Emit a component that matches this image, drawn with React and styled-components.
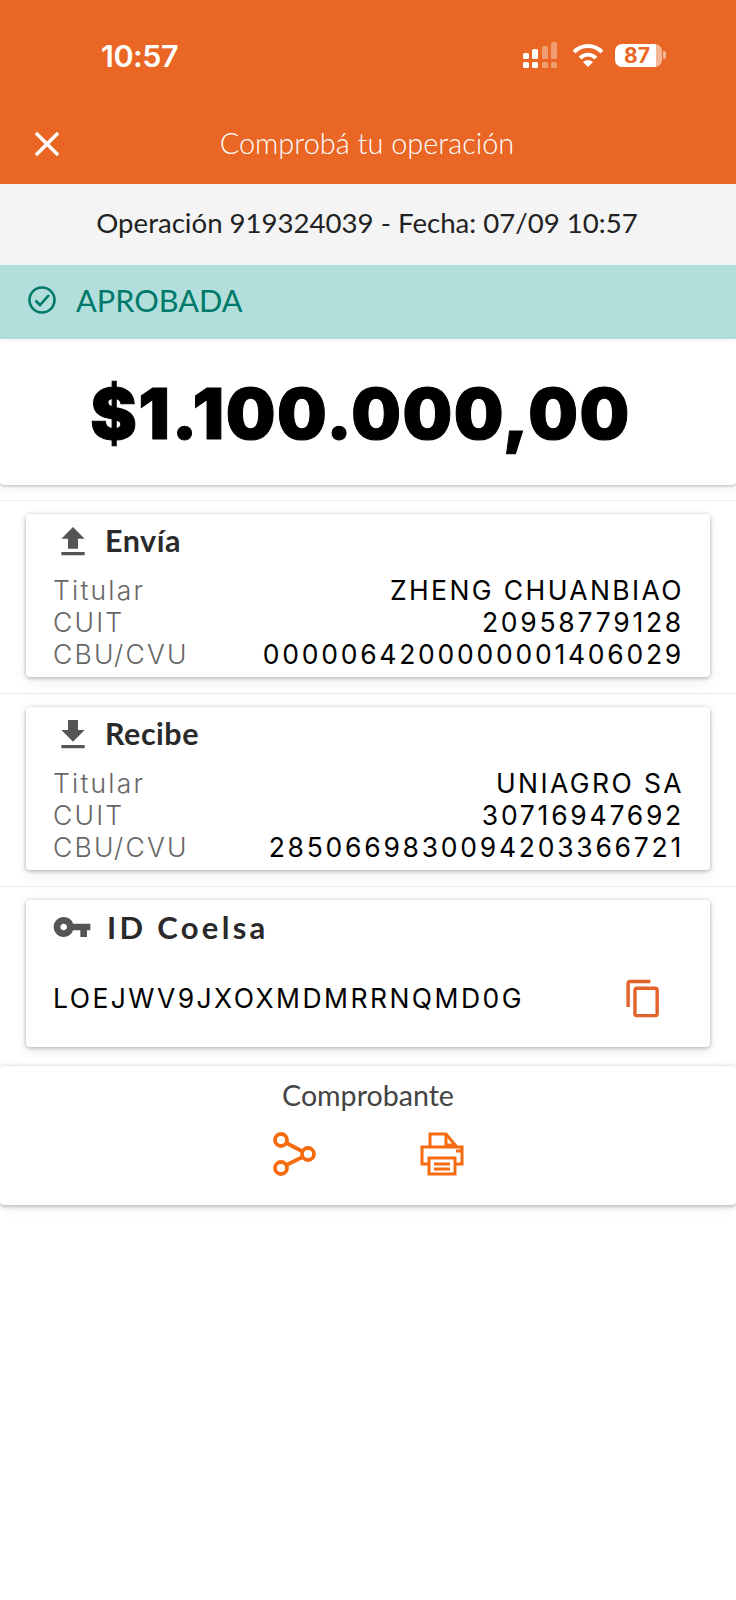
import React from "react";
import styled, { createGlobalStyle } from "styled-components";
import { MdFileUpload, MdFileDownload, MdVpnKey, MdContentCopy, MdClose } from "react-icons/md";

const GlobalStyle = createGlobalStyle`
  html, body {
    margin: 0;
    padding: 0;
    background: #fff;
  }
  * {
    box-sizing: border-box;
  }
`;

const Page = styled.div`
  width: 736px;
  height: 1600px;
  overflow: hidden;
  background: #fff;
  font-family: "Lato", "Noto Sans", sans-serif;
`;

const Header = styled.header`
  height: 184px;
  background: #ea6625;
  color: #fff;
  display: flex;
  flex-direction: column;
`;

const StatusBar = styled.div`
  height: 110px;
  display: flex;
  align-items: center;
  justify-content: space-between;
  padding: 0 70px 0 101px;
`;

const Time = styled.span`
  font-family: "Inter", sans-serif;
  font-size: 30.5px;
  font-weight: 600;
  letter-spacing: -0.5px;
`;

const StatusIcons = styled.div`
  display: flex;
  align-items: center;
  gap: 11px;
`;

const Battery = styled.div`
  width: 51px;
  height: 23px;
  display: flex;
  align-items: center;
`;

const BatteryBody = styled.div`
  width: 47px;
  height: 100%;
  border-radius: 7px;
  background: linear-gradient(90deg, #fff 88%, #f6b797 88%);
  color: #ea6625;
  font-family: "Inter", sans-serif;
  font-size: 21px;
  font-weight: 700;
  line-height: 23px;
  text-align: center;
  padding-right: 3px;
`;

const BatteryTip = styled.div`
  width: 3px;
  height: 8px;
  margin-left: 1px;
  border-radius: 0 2px 2px 0;
  background: #f6b797;
`;

const NavBar = styled.div`
  height: 74px;
  padding-bottom: 10px;
  display: flex;
  align-items: center;
  justify-content: center;
  position: relative;
`;

const CloseButton = styled.div`
  position: absolute;
  left: 26px;
  top: 13px;
  display: flex;
  font-size: 42px;
`;

const NavTitle = styled.span`
  font-size: 28.9px;
  font-weight: 300;
  margin-right: 2px;
`;

const InfoBar = styled.div`
  height: 81px;
  background: #f4f4f4;
  display: flex;
  align-items: center;
  justify-content: center;
  color: #222;
  font-size: 27.6px;
  padding-right: 2px;
  padding-bottom: 4px;
`;

const StatusBanner = styled.div`
  height: 74px;
  background: #b2dfdb;
  color: #00796b;
  display: flex;
  align-items: center;
  gap: 19px;
  padding: 0 0 4px 27px;
  font-size: 30.7px;
`;

const AmountCard = styled.div`
  height: 144px;
  margin-top: 2px;
  background: #fff;
  border-radius: 4px;
  box-shadow: 0 1px 3px rgba(0, 0, 0, 0.25), 0 4px 12px rgba(0, 0, 0, 0.06);
  display: flex;
  align-items: center;
  justify-content: center;
  padding: 0 15px 0 0;
  font-family: "Inter", sans-serif;
  font-size: 70px;
  font-weight: 900;
  color: #000;
  letter-spacing: 1.5px;
  -webkit-text-stroke: 1px #000;
`;

const Section = styled.section`
  margin-top: ${({ $gap }) => $gap}px;
  padding: 13px 26px 0;
  border-top: 1px solid #ececec;
`;

const Card = styled.div`
  height: ${({ $height }) => $height}px;
  background: #fff;
  border-radius: 4px;
  box-shadow: 0 1px 4px rgba(0, 0, 0, 0.3), 0 4px 14px rgba(0, 0, 0, 0.07);
  padding: 0 28px;
  display: flex;
  flex-direction: column;
`;

const CardTitle = styled.div`
  height: ${({ $height }) => $height}px;
  display: flex;
  align-items: center;
  gap: ${({ $gap }) => $gap}px;
  color: #2a2a2a;
  font-size: ${({ $size }) => $size}px;
  font-weight: 700;
  letter-spacing: ${({ $spacing }) => $spacing || 0}px;
`;

const TitleIcon = styled.span`
  display: flex;
  color: #555;
  font-size: ${({ $size }) => $size}px;
  margin-left: ${({ $shift }) => $shift || 0}px;
  margin-top: ${({ $drop }) => $drop || 0}px;
`;

const Rows = styled.div`
  margin-top: 8px;
  display: flex;
  flex-direction: column;
`;

const Row = styled.div`
  height: 32px;
  display: flex;
  align-items: center;
  justify-content: space-between;
  font-family: "Inter", sans-serif;
  font-size: 26.5px;
`;

const Label = styled.span`
  color: #666;
  font-weight: 300;
  letter-spacing: 2.2px;
  margin-left: -1px;
`;

const Value = styled.span`
  color: #000;
  letter-spacing: ${({ $spacing }) => $spacing}px;
  margin-right: -2px;
`;

const CoelsaRow = styled.div`
  flex: 1;
  display: flex;
  align-items: center;
  justify-content: space-between;
  padding: 0 18px 5px 0;
  font-family: "Inter", sans-serif;
  font-size: 26.5px;
  color: #000;
  letter-spacing: 2.45px;
`;

const CoelsaId = styled.span`
  margin-left: -1px;
`;

const CopyIcon = styled.span`
  display: flex;
  color: #e2622a;
  font-size: 41px;
`;

const ReceiptCard = styled.div`
  height: 139px;
  margin-top: 19px;
  background: #fff;
  border-radius: 4px;
  box-shadow: 0 1px 4px rgba(0, 0, 0, 0.3), 0 4px 12px rgba(0, 0, 0, 0.07);
  display: flex;
  flex-direction: column;
  align-items: center;
  padding-top: 11px;
`;

const ReceiptTitle = styled.div`
  color: #444;
  font-size: 28.6px;
  line-height: 36px;
`;

const ReceiptActions = styled.div`
  display: flex;
  gap: 103px;
  margin-top: 19px;
`;

const CheckIcon = () => (
  <svg width="30" height="30" viewBox="0 0 30 30" fill="none" stroke="currentColor" strokeWidth="2.6">
    <circle cx="15" cy="15" r="12.5" />
    <path d="M8.5 15.5l4.5 4.5 9-10" />
  </svg>
);

const SignalIcon = () => (
  <svg width="38" height="26" viewBox="0 0 38 26" fill="#fff">
    <rect x="0" y="11" width="6" height="6" rx="1.5" />
    <rect x="0" y="20" width="6" height="6" rx="1.5" />
    <rect x="9" y="7" width="6" height="10" rx="1.5" />
    <rect x="9" y="20" width="6" height="6" rx="1.5" />
    <g opacity="0.35">
      <rect x="19" y="4" width="6" height="13" rx="1.5" />
      <rect x="19" y="20" width="6" height="6" rx="1.5" />
      <rect x="28" y="0" width="6" height="17" rx="1.5" />
      <rect x="28" y="20" width="6" height="6" rx="1.5" />
    </g>
  </svg>
);

const WifiIcon = () => (
  <svg width="32" height="24" viewBox="0 0 32 24" fill="none" stroke="#fff" strokeWidth="4">
    <path d="M2 9c8-8 20-8 28 0" />
    <path d="M8 15c5-4.500 11-4.500 16 0" />
    <path d="M16 24l-5-5c3-2.500 7-2.500 10 0z" fill="#fff" stroke="none" />
  </svg>
);

const ShareIcon = () => (
  <svg width="44" height="44" viewBox="0 0 44 44" fill="none" stroke="#f56b10" strokeWidth="3.8">
    <circle cx="8" cy="8" r="6" />
    <circle cx="35" cy="22" r="6" />
    <circle cx="8" cy="36" r="6" />
    <path d="M13.500 11l16 8.500M13.500 33l16-8" />
  </svg>
);

const PrinterIcon = () => (
  <svg width="44" height="44" viewBox="0 0 44 44" fill="none" stroke="#f56b10" strokeWidth="3">
    <path d="M10 15V2h16l10 12v1" />
    <path d="M26 2v11h9" />
    <path d="M9 32H2V15h40v17h-7" />
    <path d="M36 19h5" />
    <path d="M9 26h26v16H9z" />
    <path d="M14 32h16M14 37h16" />
  </svg>
);

const accounts = [
  {
    title: "Envía",
    Icon: MdFileUpload,
    gap: 15,
    titular: "ZHENG CHUANBIAO",
    cuit: "20958779128",
    cbu: "0000064200000001406029",
  },
  {
    title: "Recibe",
    Icon: MdFileDownload,
    gap: 16,
    titular: "UNIAGRO SA",
    cuit: "30716947692",
    cbu: "2850669830094203366721",
  },
];

const App = () => {
  return (
    <Page>
      <GlobalStyle />
      <Header>
        <StatusBar>
          <Time>10:57</Time>
          <StatusIcons>
            <SignalIcon />
            <WifiIcon />
            <Battery>
              <BatteryBody>87</BatteryBody>
              <BatteryTip />
            </Battery>
          </StatusIcons>
        </StatusBar>
        <NavBar>
          <CloseButton>
            <MdClose />
          </CloseButton>
          <NavTitle>Comprobá tu operación</NavTitle>
        </NavBar>
      </Header>

      <InfoBar>Operación 919324039 - Fecha: 07/09 10:57</InfoBar>

      <StatusBanner>
        <CheckIcon />
        APROBADA
      </StatusBanner>

      <AmountCard>$1.100.000,00</AmountCard>

      {accounts.map(({ title, Icon, gap, titular, cuit, cbu }) => (
        <Section key={title} $gap={gap}>
          <Card $height={163}>
            <CardTitle $height={52} $gap={12} $size={30.5} $spacing={0.5}>
              <TitleIcon $size={40} $shift={-1} $drop={4}>
                <Icon />
              </TitleIcon>
              {title}
            </CardTitle>
            <Rows>
              <Row>
                <Label>Titular</Label>
                <Value $spacing={2.4}>{titular}</Value>
              </Row>
              <Row>
                <Label>CUIT</Label>
                <Value $spacing={2.75}>{cuit}</Value>
              </Row>
              <Row>
                <Label>CBU/CVU</Label>
                <Value $spacing={2.75}>{cbu}</Value>
              </Row>
            </Rows>
          </Card>
        </Section>
      ))}

      <Section $gap={16}>
        <Card $height={147}>
          <CardTitle $height={54} $gap={15} $size={31} $spacing={3.3}>
            <TitleIcon $size={40} $shift={-2}>
              <MdVpnKey />
            </TitleIcon>
            ID Coelsa
          </CardTitle>
          <CoelsaRow>
            <CoelsaId>LOEJWV9JXOXMDMRRNQMD0G</CoelsaId>
            <CopyIcon>
              <MdContentCopy />
            </CopyIcon>
          </CoelsaRow>
        </Card>
      </Section>

      <ReceiptCard>
        <ReceiptTitle>Comprobante</ReceiptTitle>
        <ReceiptActions>
          <ShareIcon />
          <PrinterIcon />
        </ReceiptActions>
      </ReceiptCard>
    </Page>
  );
};

export default App;
